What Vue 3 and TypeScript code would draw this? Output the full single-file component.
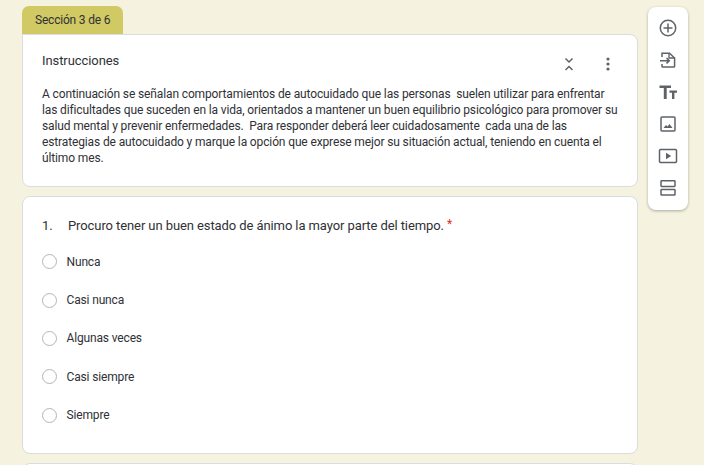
<script setup lang="ts">
const lines = [
  'A continuación se señalan comportamientos de autocuidado que las personas  suelen utilizar para enfrentar',
  'las dificultades que suceden en la vida, orientados a mantener un buen equilibrio psicológico para promover su',
  'salud mental y prevenir enfermedades.  Para responder deberá leer cuidadosamente  cada una de las',
  'estrategias de autocuidado y marque la opción que exprese mejor su situación actual, teniendo en cuenta el',
  'último mes.',
];

const options = ['Nunca', 'Casi nunca', 'Algunas veces', 'Casi siempre', 'Siempre'];
</script>

<template>
  <div class="page">
    <main class="form">
      <div class="tab">Sección 3 de 6</div>
      <section class="card intro">
        <div class="intro-head">
          <div class="intro-title">Instrucciones</div>
          <div class="intro-actions">
            <svg class="collapse" width="14" height="18" viewBox="0 0 14 18">
              <path d="M3.5 3.5l3.5 3.5 3.5-3.5M3.5 15l3.5-3.5 3.5 3.5" fill="none" stroke="#5f6368" stroke-width="1.5" />
            </svg>
            <svg class="more" width="6" height="16" viewBox="0 0 6 16">
              <circle cx="3" cy="3" r="1.6" fill="#5f6368" />
              <circle cx="3" cy="8" r="1.6" fill="#5f6368" />
              <circle cx="3" cy="13" r="1.6" fill="#5f6368" />
            </svg>
          </div>
        </div>
        <div class="intro-text">
          <div v-for="(line, i) in lines" :key="i">{{ line }}</div>
        </div>
      </section>

      <section class="card question">
        <div class="question-title">
          <span class="num">1.</span>
          <span>Procuro tener un buen estado de ánimo la mayor parte del tiempo.</span>
          <span class="req">*</span>
        </div>
        <div class="options">
          <div v-for="opt in options" :key="opt" class="option">
            <span class="radio"></span>
            <span>{{ opt }}</span>
          </div>
        </div>
      </section>

      <section class="card next"></section>
    </main>

    <aside class="toolbar">
      <svg width="24" height="24" viewBox="0 0 24 24">
        <circle cx="12" cy="12" r="7.7" fill="none" stroke="#5f6368" stroke-width="1.5" />
        <path d="M12 7.5v9M7.5 12h9" stroke="#5f6368" stroke-width="1.5" />
      </svg>
      <svg width="24" height="24" viewBox="0 0 24 24">
        <path d="M6 9V5.2h7.5L18.6 10v8.2a.8.8 0 0 1-.8.8H6.8a.8.8 0 0 1-.8-.8V16" fill="none" stroke="#5f6368" stroke-width="1.5" />
        <path d="M13 5.2V10h5.5" fill="none" stroke="#5f6368" stroke-width="1.3" />
        <path d="M4 12.7h9M10.5 10l2.8 2.7-2.8 2.7" fill="none" stroke="#5f6368" stroke-width="1.5" />
      </svg>
      <svg width="24" height="24" viewBox="0 0 24 24">
        <path d="M3.5 5.5h11.5v2.6h-4.3V19H7.8V8.1H3.5z" fill="#5f6368" />
        <path d="M13.5 10.5h7.5v2.2h-2.6V19h-2.4v-6.3h-2.5z" fill="#5f6368" />
      </svg>
      <svg width="24" height="24" viewBox="0 0 24 24">
        <rect x="5" y="5" width="14" height="14" rx="1" fill="none" stroke="#5f6368" stroke-width="1.5" />
        <path d="M7.5 16l2.5-3 1.6 1.6 1.9-2.6 3 4z" fill="#5f6368" />
      </svg>
      <svg width="24" height="24" viewBox="0 0 24 24">
        <rect x="3.5" y="5.5" width="17" height="13" rx="1" fill="none" stroke="#5f6368" stroke-width="1.5" />
        <path d="M10 8.8l5.2 3.2-5.2 3.2z" fill="#5f6368" />
      </svg>
      <svg width="24" height="24" viewBox="0 0 24 24">
        <rect x="5" y="4.8" width="14" height="5.6" rx=".6" fill="none" stroke="#5f6368" stroke-width="1.5" />
        <rect x="5" y="13.4" width="14" height="5.6" rx=".6" fill="none" stroke="#5f6368" stroke-width="1.5" />
      </svg>
    </aside>
  </div>
</template>

<style>
html,
body {
  margin: 0;
  background: #f5f2df;
  overflow: hidden;
}
</style>

<style scoped>
.page {
  display: flex;
  align-items: flex-start;
  gap: 10px;
  height: 465px;
  padding: 6px 0 0 22px;
  box-sizing: border-box;
  overflow: hidden;
  font-family: Roboto, "Liberation Sans", sans-serif;
  color: #2f3136;
}
.form {
  width: 616px;
  flex-shrink: 0;
}
.tab {
  width: 101px;
  height: 28px;
  box-sizing: border-box;
  padding-left: 13px;
  background: #d0c964;
  border-radius: 7px 7px 0 0;
  font-size: 12px;
  letter-spacing: -0.2px;
  line-height: 28px;
}
.card {
  background: #fff;
  border: 1px solid #dadce0;
  border-radius: 8px;
  box-sizing: border-box;
}
.intro {
  height: 153px;
  border-top-left-radius: 0;
  padding: 0 19px;
}
.intro-head {
  display: flex;
  justify-content: space-between;
  height: 46px;
  padding-top: 18px;
  box-sizing: border-box;
}
.intro-title {
  font-size: 13px;
  letter-spacing: -0.08px;
  line-height: 16px;
}
.intro-actions {
  display: flex;
  align-items: center;
  gap: 29px;
  height: 22px;
  padding-right: 7px;
}
.collapse,
.more {
  display: block;
}
.intro-text {
  margin-top: 5px;
  font-size: 12px;
  letter-spacing: -0.13px;
  line-height: 16px;
  white-space: pre;
}
.question {
  height: 258px;
  margin-top: 9px;
  padding: 21px 19px 0;
}
.question-title {
  display: flex;
  font-size: 13px;
  letter-spacing: -0.09px;
  line-height: 16px;
}
.num {
  width: 26px;
  flex-shrink: 0;
}
.req {
  color: #d93025;
  margin-left: 3px;
  font-size: 12px;
  line-height: 12px;
}
.options {
  margin-top: 8.5px;
}
.option {
  display: flex;
  align-items: center;
  gap: 9.5px;
  height: 38.35px;
  font-size: 12px;
  letter-spacing: -0.15px;
}
.radio {
  width: 15px;
  height: 15px;
  box-sizing: border-box;
  border: 1px solid #b5b5b5;
  border-radius: 50%;
}
.next {
  height: 30px;
  margin-top: 9px;
}
.toolbar {
  display: flex;
  flex-direction: column;
  align-items: center;
  gap: 8px;
  width: 40px;
  height: 203px;
  margin-top: 1px;
  padding-top: 9px;
  box-sizing: border-box;
  background: #fff;
  border-radius: 8px;
  box-shadow: 0 1px 3px rgba(60, 64, 67, 0.4);
}
</style>
